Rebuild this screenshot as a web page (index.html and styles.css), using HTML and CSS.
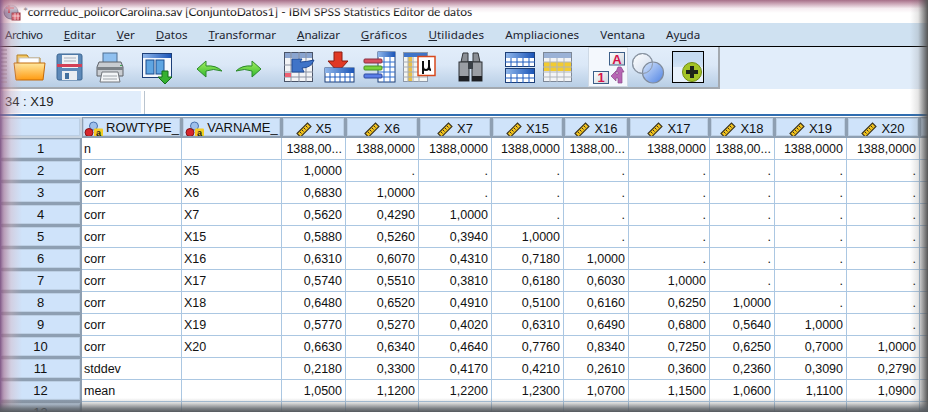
FILE: index.html
```html
<!DOCTYPE html>
<html lang="es">
<head>
<meta charset="utf-8">
<title>IBM SPSS Statistics Editor de datos</title>
<link rel="stylesheet" href="styles.css">
</head>
<body>
<svg class="defs" width="0" height="0" aria-hidden="true">
  <defs>
    <linearGradient id="gYel" x1="0" y1="0" x2="0" y2="1"><stop offset="0" stop-color="#ffe9a0"/><stop offset="1" stop-color="#ff9a10"/></linearGradient>
    <linearGradient id="gGrn" x1="0" y1="0" x2="0" y2="1"><stop offset="0" stop-color="#a8ef60"/><stop offset="1" stop-color="#2eb82e"/></linearGradient>
    <linearGradient id="gBlu" x1="0" y1="0" x2="1" y2="1"><stop offset="0" stop-color="#d8e6fb"/><stop offset="1" stop-color="#4f83e4"/></linearGradient>
    <linearGradient id="gPale" x1="0" y1="0" x2="1" y2="1"><stop offset="0" stop-color="#ffffff"/><stop offset="1" stop-color="#cdd9ec"/></linearGradient>
    <linearGradient id="gBox" x1="0" y1="0" x2="1" y2="1"><stop offset="0" stop-color="#ffffff"/><stop offset="1" stop-color="#cfd4da"/></linearGradient>
    <linearGradient id="gHead" x1="0" y1="0" x2="1" y2="0"><stop offset="0" stop-color="#8fb6ea"/><stop offset="1" stop-color="#1b55b8"/></linearGradient>
    <symbol id="ruler" viewBox="0 0 16 16">
      <path d="M1 11.500 11.500 1 15 4.500 4.500 15Z" fill="#f2c21c" stroke="#3a3320" stroke-width="1.100"/>
      <path d="M4 10l1.500 1.500M6 8l1.500 1.500M8 6l1.500 1.500M10 4l1.500 1.500" stroke="#3a3320" stroke-width="1"/>
    </symbol>
    <symbol id="nominal" viewBox="0 0 22 18">
      <circle cx="9.500" cy="5" r="4" fill="#9dbfec" stroke="#4a72ae"/>
      <circle cx="5" cy="11.500" r="4" fill="#d8262c" stroke="#7e1216"/>
      <rect x="10" y="7.500" width="9" height="9" rx="1" fill="#f6cc22"/>
      <text x="14.500" y="15" class="nominal-a">a</text>
    </symbol>
  </defs>
</svg>

<div class="window">
  <header class="titlebar">
    <svg class="app-icon" viewBox="0 0 18 18" width="18" height="18">
      <circle cx="8" cy="9" r="7" fill="#8f9cb8" stroke="#58607a"/>
      <path d="M3 5h8M6 2v8" stroke="#b81e2e" stroke-width="2"/>
      <rect x="9" y="10" width="8" height="7" fill="#e05a66" stroke="#8e2030"/>
      <path d="M9 13h8M12 10v7M15 10v7" stroke="#fff" stroke-width=".7"/>
    </svg>
    <span class="title-text">*corrreduc_policorCarolina.sav [ConjuntoDatos1] - IBM SPSS Statistics Editor de datos</span>
  </header>

  <nav class="menubar">
    <span class="m-first">Archivo</span><span><u>E</u>ditar</span><span><u>V</u>er</span><span><u>D</u>atos</span><span><u>T</u>ransformar</span><span class="m-tight"><u>A</u>nalizar</span><span class="m-wider"><u>G</u>ráficos</span><span class="m-wide"><u>U</u>tilidades</span><span class="m-wide">Ampliaciones</span><span>Ventana</span><span>Ay<u>u</u>da</span>
  </nav>

  <div class="toolbar">
    <div class="tool-group">
    <div class="grip"></div>
    <svg class="tb i-open" viewBox="0 0 33 30" width="33" height="30">
      <path d="M4 6V3h10l2 3h11v5H4Z" fill="#f4c860" stroke="#b07a18"/>
      <rect x="6" y="6" width="20" height="6" fill="#fff" stroke="#c9c9c9"/>
      <path d="M1 11h31l-2 17H3Z" fill="url(#gYel)" stroke="#c36a0a"/>
    </svg>
    <svg class="tb i-save" viewBox="0 0 27 28" width="27" height="28">
      <path d="M1 3q0-2 2-2h21q2 0 2 2v23q0 1-2 1H3q-2 0-2-2Z" fill="#5d89b8" stroke="#3c6692"/>
      <rect x="6" y="2" width="16" height="13" fill="#eef1f5"/>
      <path d="M8 5h12M8 8h12" stroke="#a8b1bd"/>
      <rect x="1" y="11" width="25" height="3" fill="#d33f56"/>
      <rect x="6" y="18" width="15" height="9" fill="#e8edf2"/>
      <rect x="9" y="20" width="4" height="6" fill="#41709f"/>
    </svg>
    <svg class="tb i-print" viewBox="0 0 28 31" width="28" height="31">
      <rect x="7" y="1" width="14" height="11" fill="#8fc0f0" stroke="#4e6f92"/>
      <path d="M3 10h22l2 5v9H1v-9Z" fill="#c9cdd2" stroke="#5e6268"/>
      <path d="M1 15h26v3H1Z" fill="#7c8288"/>
      <rect x="24" y="13" width="2" height="1" fill="#3aa552"/>
      <path d="M6 20h16l2 10H4Z" fill="#f3f5f7" stroke="#73777d"/>
      <path d="M7 24h14M7 27h14" stroke="#9ea4aa"/>
    </svg>
    <svg class="tb i-var" viewBox="0 0 31 31" width="31" height="31">
      <rect x=".5" y=".5" width="29" height="24" fill="#f5f8fd" stroke="#1d3f78"/>
      <rect x="1" y="1" width="28" height="4" fill="url(#gHead)"/>
      <rect x="4" y="7" width="8" height="14" fill="#5ea5e2" stroke="#1b4d8e"/>
      <rect x="14" y="7" width="8" height="14" fill="#5ea5e2" stroke="#1b4d8e"/>
      <path d="M20 18h6v6h4l-7 7-7-7h4Z" fill="#35b030" stroke="#146d1a"/>
    </svg>
    <svg class="tb i-undo" viewBox="0 0 27 18" width="27" height="18">
      <path d="M1 9 10 1v5q10-1 16 5-9-3-16 0v6Z" fill="url(#gGrn)" stroke="#2c8a2c"/>
    </svg>
    <svg class="tb i-redo" viewBox="0 0 27 18" width="27" height="18">
      <path d="M26 9 17 1v5Q7 5 1 11q9-3 16 0v6Z" fill="url(#gGrn)" stroke="#2c8a2c"/>
    </svg>
    <svg class="tb i-goto" viewBox="0 0 31 31" width="31" height="31">
      <rect x=".5" y=".5" width="28" height="29" fill="#f3f4f6" stroke="#4a5468"/>
      <rect x="1" y="1" width="27" height="5" fill="#8aa4cf"/>
      <path d="M0 13h29M0 20h29M0 25h29M7 0v30M15 0v30M22 0v30" stroke="#8b93a3"/>
      <rect x="1" y="21" width="6" height="4" fill="#ee6072"/>
      <path d="M8 7h10l-2 3q6 0 14-2-3 8-12 8l2 4H8Z" fill="#3f74c8" stroke="#1f4a96"/>
    </svg>
    <svg class="tb i-inscase" viewBox="0 0 31 32" width="31" height="32">
      <path d="M10 1h8v9h6L14 21 4 10h6Z" fill="#e03824" stroke="#8c1d10"/>
      <rect x="1" y="17" width="29" height="14" fill="#fff" stroke="#1d3f78"/>
      <rect x="1" y="17" width="29" height="5" fill="url(#gHead)"/>
      <path d="M1 26h29M6 22v9M11 22v9M16 22v9M21 22v9M26 22v9" stroke="#1f5cc0"/>
    </svg>
    <svg class="tb i-insvar" viewBox="0 0 33 32" width="33" height="32">
      <rect x="15" y="1" width="17" height="30" fill="#fff" stroke="#1d3f78"/>
      <rect x="15" y="1" width="17" height="5" fill="url(#gHead)"/>
      <path d="M15 11h17M15 16h17M15 21h17M15 26h17M21 6v25M27 6v25" stroke="#2f6fd0"/>
      <rect x="1" y="8" width="18" height="4" rx="1" fill="#d85060" stroke="#8a3040"/>
      <rect x="1" y="15" width="18" height="4" rx="1" fill="#7ad23c" stroke="#4a9020"/>
      <rect x="1" y="23" width="18" height="4" rx="1" fill="#5a7ee8" stroke="#2f4aa0"/>
    </svg>
    <svg class="tb i-stats" viewBox="0 0 33 31" width="33" height="31">
      <rect x=".5" y=".5" width="24" height="29" fill="#f5f6f2" stroke="#8d98a8"/>
      <rect x="1" y="1" width="23" height="4" fill="#3f74c8"/>
      <rect x="5" y="5" width="4" height="24" fill="#e8c14a"/>
      <path d="M0 10h24M0 15h24M0 20h24M0 25h24M5 5v25M10 5v25M16 5v25" stroke="#a6acb5"/>
      <rect x="15" y="4.500" width="17" height="19" fill="#fff" stroke="#d8491c" stroke-width="1.500"/>
      <path d="M20 9v13M20 15q0 3 3 3t3-4V8M26 14q0 4 2 4" fill="none" stroke="#111" stroke-width="2"/>
    </svg>
    <svg class="tb i-find" viewBox="0 0 25 30" width="25" height="30">
      <path d="M3 10 5 1h5v9ZM15 1h5l2 9h-7Z" fill="#8a8e94" stroke="#33363a"/>
      <rect x="1" y="10" width="10" height="19" fill="#9a9ea4" stroke="#2d3034"/>
      <rect x="14" y="10" width="10" height="19" fill="#9a9ea4" stroke="#2d3034"/>
      <rect x="10" y="9" width="5" height="8" fill="#3a4046"/>
      <rect x="1" y="24" width="10" height="5" fill="#1e2024"/>
      <rect x="14" y="24" width="10" height="5" fill="#1e2024"/>
    </svg>
    <svg class="tb i-split" viewBox="0 0 30 31" width="30" height="31">
      <g id="split-half">
        <rect x=".5" y=".5" width="29" height="14" fill="#fff" stroke="#1d3f78"/>
        <rect x="1" y="1" width="28" height="5" fill="url(#gHead)"/>
        <path d="M0 10h30M6 6v9M12 6v9M18 6v9M24 6v9" stroke="#1f5cc0"/>
      </g>
      <use href="#split-half" y="16"/>
    </svg>
    <svg class="tb i-select" viewBox="0 0 30 30" width="30" height="30">
      <rect x=".5" y=".5" width="28" height="29" fill="#f3f4f6" stroke="#7d8898"/>
      <rect x="1" y="1" width="27" height="5" fill="#9bb2d6"/>
      <rect x="1" y="10" width="27" height="9" fill="#f2cb30"/>
      <path d="M0 10h29M0 15h29M0 20h29M0 25h29M7 6v24M14 6v24M21 6v24" stroke="#b0b5bc"/>
    </svg>
    <div class="labels-btn">
      <svg viewBox="0 0 34 34" width="34" height="34">
        <rect x="17.500" y=".5" width="15" height="12.500" fill="url(#gBox)" stroke="#3d5f88"/>
        <text x="25" y="11.500" class="lab-a">A</text>
        <rect x="1.500" y="19.500" width="15" height="12" fill="url(#gBox)" stroke="#3d5f88"/>
        <text x="9" y="30" class="lab-1">1</text>
        <path d="M26 15h3l3 5h-2v11h-4v-5h-2v3l-5-5 5-5v3h2v-2h-2Z" fill="#b765b4" stroke="#8a4a8a" stroke-width=".7"/>
      </svg>
    </div>
    <svg class="tb i-sets" viewBox="0 0 33 31" width="33" height="31">
      <circle cx="10.500" cy="10.500" r="10" fill="url(#gPale)" stroke="#8c97a5" stroke-width="1.200"/>
      <circle cx="21" cy="19.500" r="10.500" fill="url(#gBlu)" stroke="#7f8a9a" stroke-width="1.200"/>
      <circle cx="10.500" cy="10.500" r="10" fill="none" stroke="#8c97a5" stroke-width="1"/>
    </svg>
    <div class="addon-btn">
      <svg viewBox="0 0 20 20" width="20" height="20">
        <circle cx="10" cy="10" r="9.500" fill="#a4c425" stroke="#708a12"/>
        <path d="M8 4h4v4h4v4h-4v4H8v-4H4V8h4Z" fill="#1e2418"/>
      </svg>
    </div>
    </div>
  </div>

  <div class="formula">
    <div class="cell-ref">34 : X19</div>
    <div class="cell-value"></div>
  </div>

  <table class="sheet">
    <colgroup>
      <col class="c-row"><col class="c-100"><col class="c-100"><col class="c-64"><col class="c-73"><col class="c-73"><col class="c-72"><col class="c-65"><col class="c-81"><col class="c-65"><col class="c-72"><col class="c-73"><col class="c-rest">
    </colgroup>
    <thead>
      <tr>
        <th class="corner"></th>
        <th><svg class="h-icon"><use href="#nominal"/></svg>ROWTYPE_</th>
        <th><svg class="h-icon"><use href="#nominal"/></svg>VARNAME_</th>
        <th><svg class="h-ruler"><use href="#ruler"/></svg>X5</th>
        <th><svg class="h-ruler"><use href="#ruler"/></svg>X6</th>
        <th><svg class="h-ruler"><use href="#ruler"/></svg>X7</th>
        <th><svg class="h-ruler"><use href="#ruler"/></svg>X15</th>
        <th><svg class="h-ruler"><use href="#ruler"/></svg>X16</th>
        <th><svg class="h-ruler"><use href="#ruler"/></svg>X17</th>
        <th><svg class="h-ruler"><use href="#ruler"/></svg>X18</th>
        <th><svg class="h-ruler"><use href="#ruler"/></svg>X19</th>
        <th><svg class="h-ruler"><use href="#ruler"/></svg>X20</th>
        <th></th>
      </tr>
    </thead>
    <tbody>
      <tr><th>1</th><td>n</td><td></td><td class="n">1388,00...</td><td class="n">1388,0000</td><td class="n">1388,0000</td><td class="n">1388,0000</td><td class="n">1388,00...</td><td class="n">1388,0000</td><td class="n">1388,00...</td><td class="n">1388,0000</td><td class="n">1388,0000</td><td></td></tr>
      <tr><th>2</th><td>corr</td><td>X5</td><td class="n">1,0000</td><td class="n">.</td><td class="n">.</td><td class="n">.</td><td class="n">.</td><td class="n">.</td><td class="n">.</td><td class="n">.</td><td class="n">.</td><td></td></tr>
      <tr><th>3</th><td>corr</td><td>X6</td><td class="n">0,6830</td><td class="n">1,0000</td><td class="n">.</td><td class="n">.</td><td class="n">.</td><td class="n">.</td><td class="n">.</td><td class="n">.</td><td class="n">.</td><td></td></tr>
      <tr><th>4</th><td>corr</td><td>X7</td><td class="n">0,5620</td><td class="n">0,4290</td><td class="n">1,0000</td><td class="n">.</td><td class="n">.</td><td class="n">.</td><td class="n">.</td><td class="n">.</td><td class="n">.</td><td></td></tr>
      <tr><th>5</th><td>corr</td><td>X15</td><td class="n">0,5880</td><td class="n">0,5260</td><td class="n">0,3940</td><td class="n">1,0000</td><td class="n">.</td><td class="n">.</td><td class="n">.</td><td class="n">.</td><td class="n">.</td><td></td></tr>
      <tr><th>6</th><td>corr</td><td>X16</td><td class="n">0,6310</td><td class="n">0,6070</td><td class="n">0,4310</td><td class="n">0,7180</td><td class="n">1,0000</td><td class="n">.</td><td class="n">.</td><td class="n">.</td><td class="n">.</td><td></td></tr>
      <tr><th>7</th><td>corr</td><td>X17</td><td class="n">0,5740</td><td class="n">0,5510</td><td class="n">0,3810</td><td class="n">0,6180</td><td class="n">0,6030</td><td class="n">1,0000</td><td class="n">.</td><td class="n">.</td><td class="n">.</td><td></td></tr>
      <tr><th>8</th><td>corr</td><td>X18</td><td class="n">0,6480</td><td class="n">0,6520</td><td class="n">0,4910</td><td class="n">0,5100</td><td class="n">0,6160</td><td class="n">0,6250</td><td class="n">1,0000</td><td class="n">.</td><td class="n">.</td><td></td></tr>
      <tr><th>9</th><td>corr</td><td>X19</td><td class="n">0,5770</td><td class="n">0,5270</td><td class="n">0,4020</td><td class="n">0,6310</td><td class="n">0,6490</td><td class="n">0,6800</td><td class="n">0,5640</td><td class="n">1,0000</td><td class="n">.</td><td></td></tr>
      <tr><th>10</th><td>corr</td><td>X20</td><td class="n">0,6630</td><td class="n">0,6340</td><td class="n">0,4640</td><td class="n">0,7760</td><td class="n">0,8340</td><td class="n">0,7250</td><td class="n">0,6250</td><td class="n">0,7000</td><td class="n">1,0000</td><td></td></tr>
      <tr><th>11</th><td>stddev</td><td></td><td class="n">0,2180</td><td class="n">0,3300</td><td class="n">0,4170</td><td class="n">0,4210</td><td class="n">0,2610</td><td class="n">0,3600</td><td class="n">0,2360</td><td class="n">0,3090</td><td class="n">0,2790</td><td></td></tr>
      <tr><th>12</th><td>mean</td><td></td><td class="n">1,0500</td><td class="n">1,1200</td><td class="n">1,2200</td><td class="n">1,2300</td><td class="n">1,0700</td><td class="n">1,1500</td><td class="n">1,0600</td><td class="n">1,1100</td><td class="n">1,0900</td><td></td></tr>
      <tr><th>13</th><td></td><td></td><td></td><td></td><td></td><td></td><td></td><td></td><td></td><td></td><td></td><td></td></tr>
    </tbody>
  </table>

  <div class="frame frame-top"></div>
  <div class="frame frame-left"></div>
  <div class="frame frame-right"></div>
  <div class="frame frame-bottom"></div>
</div>
</body>
</html>
```

FILE: styles.css
```css
* { box-sizing: border-box; }
html, body { margin: 0; padding: 0; }
body { width: 928px; height: 412px; overflow: hidden; background: #fff; font-family: "Liberation Sans", Arial, sans-serif; color: #111; }
.defs { position: absolute; }
.window { position: relative; width: 928px; height: 412px; overflow: hidden; display: flex; flex-direction: column; }

.titlebar { height: 23px; flex: none; display: flex; align-items: center; padding: 0 0 0 3px; background: #fff; }
.app-icon { flex: none; margin-right: 2px; }
.title-text { font: 12px Lato, sans-serif; letter-spacing: -.035px; color: #111; white-space: nowrap; }

.menubar { height: 24px; flex: none; display: flex; align-items: center; gap: 21px; padding-left: 5px; background: #cfe1f1; border-bottom: 1px solid #000; font: 11.600px "Noto Sans", sans-serif; color: #1c2430; white-space: nowrap; }
.m-first { letter-spacing: -.42px; }
.m-tight { letter-spacing: -.14px; }
.m-wide { letter-spacing: .12px; }
.m-wider { letter-spacing: .25px; }

.toolbar { height: 42px; flex: none; background: #e1edfa; }
.tool-group { width: 720px; height: 42px; display: flex; align-items: center; background: linear-gradient(#e2edfa 0%, #dbe8f7 45%, #b8cee5 100%); border-bottom: 2px solid #a3a9b0; border-right: 2px solid #a3a9b0; }
.grip { width: 6px; height: 36px; margin-left: 1px; background: repeating-linear-gradient(#b3bcc8 0 2px, transparent 2px 4px); }
.tb { flex: none; display: block; }
.i-open { margin-left: 6px; }
.i-save { margin-left: 10px; }
.i-print { margin-left: 13px; }
.i-var { margin-left: 18px; margin-top: 2px; }
.i-undo { margin-left: 23px; margin-top: 3px; }
.i-redo { margin-left: 12px; margin-top: 3px; }
.i-goto { margin-left: 22px; }
.i-inscase { margin-left: 9px; }
.i-insvar { margin-left: 8px; }
.i-stats { margin-left: 7px; }
.i-find { margin-left: 22px; }
.i-split { margin-left: 22px; }
.i-select { margin-left: 8px; }
.i-sets { margin-left: 4px; margin-top: 2px; }
.labels-btn { flex: none; margin-left: 15px; width: 40px; height: 40px; padding: 4px 0 0 3px; background: #f4f8fd; border: 1px solid #ced9e5; }
.addon-btn { flex: none; margin-left: 7px; width: 32px; height: 32px; display: flex; align-items: flex-end; justify-content: flex-end; padding: 0 1px 0 0; border: 1px solid #000; background: linear-gradient(#c6dbf1 0 8px, #d3e3f5 15px, #e8f1fb 15px); }
.lab-a, .lab-1 { font: bold 13px "Liberation Sans", sans-serif; text-anchor: middle; fill: #d4144a; }
.nominal-a { font: bold 9px "Liberation Sans", sans-serif; text-anchor: middle; fill: #222; }

.formula { height: 27px; flex: none; display: flex; gap: 3px; padding: 2px 0 0 2px; background: #fff; border-bottom: 2px solid #2f6db0; }
.cell-ref { width: 139px; height: 22px; background: #e1edfb; font-size: 13px; line-height: 22px; padding-left: 3px; color: #222; }
.cell-value { flex: 1; height: 23px; border-left: 1px solid #b9c4cf; }

.sheet { table-layout: fixed; border-collapse: separate; border-spacing: 0; width: 1000px; flex: none; font-size: 12.500px; color: #111; margin-top: 1px; }
.c-row { width: 82px; } .c-100 { width: 100px; } .c-64 { width: 64px; } .c-73 { width: 73px; } .c-72 { width: 72px; } .c-65 { width: 65px; } .c-81 { width: 81px; } .c-rest { width: 80px; }
.sheet tr { height: 22px; }
.sheet td { border-right: 1px solid #abc7e2; border-bottom: 1px solid #abc7e2; padding: 0 2px; white-space: nowrap; overflow: hidden; background: #fff; }
.sheet td.n { text-align: right; padding-right: 3px; }
.sheet th { background: #cfe3fa; border: 1px solid #8e9fb2; font-weight: normal; overflow: hidden; white-space: nowrap; box-shadow: inset 0 0 0 1px #bccfe4; }
.sheet tbody th { text-align: center; border-bottom-width: 2px; border-right-width: 2px; font-size: 13px; }
.sheet thead th { text-align: center; border-width: 1px 2px 2px 1px; font-size: 13px; padding: 2px 1px 0; line-height: 15px; }
.sheet thead tr { height: 21px; }
.corner { border-color: #c9d4e0 !important; }
.h-icon { width: 22px; height: 18px; vertical-align: -4px; margin: -3px 0; }
.h-ruler { width: 16px; height: 16px; vertical-align: -3px; margin: -2px 4px -2px 0; }

.frame { position: absolute; pointer-events: none; }
.frame-top { left: 0; right: 0; top: 0; height: 13px; background: linear-gradient(#a66f88 0%, #c79fb1 25%, rgba(240,225,232,.6) 65%, rgba(255,255,255,0) 100%); }
.frame-left { left: 0; top: 0; bottom: 0; width: 22px; background: linear-gradient(90deg, rgba(130,85,135,.9) 0, rgba(170,110,140,.6) 4px, rgba(215,170,180,.35) 11px, rgba(255,255,255,0) 100%); }
.frame-right { right: 0; top: 0; bottom: 0; width: 18px; background: linear-gradient(90deg, rgba(120,120,120,0) 0, rgba(110,110,110,.18) 45%, rgba(80,80,80,.75) 85%, #555 100%); }
.frame-bottom { left: 0; right: 0; bottom: 0; height: 14px; background: linear-gradient(rgba(110,110,110,0) 0, rgba(110,110,110,.25) 35%, rgba(90,95,100,.8) 75%, #55595e 100%); }
```
